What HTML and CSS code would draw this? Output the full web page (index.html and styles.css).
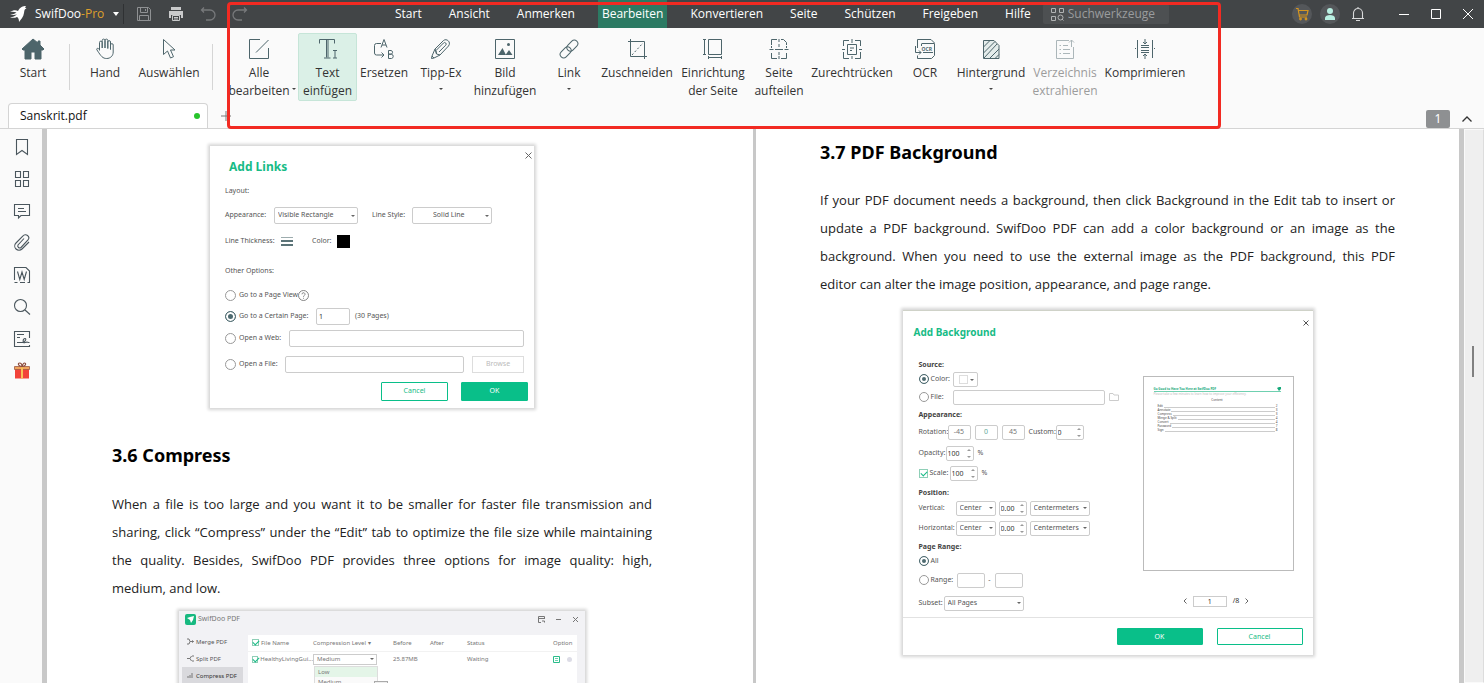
FILE: index.html
```html
<!DOCTYPE html>
<html lang="de">
<head>
<meta charset="utf-8">
<title>SwifDoo-Pro</title>
<link rel="stylesheet" href="styles.css">
</head>
<body>
<header class="titlebar">
  <div class="brand">
    <svg class="logo" width="18" height="18" viewBox="0 0 18 18"><path fill="#fff" d="M1 7C4 5 7 5 9 6C11 2 14 1 17 1L16 2.500L17.500 3.500C15.500 4 15.500 5 15 8C14.500 12 12 14 10 17C10 14.500 9.500 13 8 12C6 13 3.500 13 1 12.500C4 12 6 11 8 9.500C6 10 3 10 1 9.500C4 9.500 6 8.500 7.500 7.500C5.500 6.800 3 6.500 1 7Z"/></svg>
    <span>SwifDoo<span class="pro">-Pro</span></span>
    <svg width="8" height="6" viewBox="0 0 8 6"><path fill="#fff" d="M1 1h6L4 5z"/></svg>
  </div>
  <div class="quick">
    <button type="button" aria-label="Speichern"><svg width="16" height="16" viewBox="0 0 16 16" fill="none" stroke="#8f9193"><path d="M1.500 1.500h11l2 2v11h-13zM4.500 1.500v5h7v-5M3.500 14.500v-5h9v5M9.500 3v2"/></svg></button>
    <button type="button" aria-label="Drucken"><svg width="16" height="16" viewBox="0 0 16 16"><path fill="#c9cacb" d="M3 1h10v3H3zM1 5h14v7h-2V9H3v3H1z"/><path fill="none" stroke="#c9cacb" d="M4.500 9.500h7v5h-7zM6 11.500h4M6 13h4"/></svg></button>
    <button type="button" aria-label="Rückgängig"><svg width="16" height="16" viewBox="0 0 16 16" fill="none" stroke="#77797b" stroke-width="1.300"><path d="M4 1.500L1.500 4L4 6.500M1.500 4H10a4.700 4.700 0 0 1 0 10H6"/></svg></button>
    <button type="button" aria-label="Wiederholen"><svg width="16" height="16" viewBox="0 0 16 16" fill="none" stroke="#77797b" stroke-width="1.300"><path d="M12 1.500L14.500 4L12 6.500M14.500 4H6a4.700 4.700 0 0 0 0 10h4"/></svg></button>
  </div>
  <nav class="menu">
    <button type="button">Start</button><button type="button">Ansicht</button><button type="button">Anmerken</button><button type="button" class="active">Bearbeiten</button><button type="button">Konvertieren</button><button type="button">Seite</button><button type="button">Schützen</button><button type="button">Freigeben</button><button type="button">Hilfe</button>
  </nav>
  <label class="search">
    <svg width="13" height="13" viewBox="0 0 13 13" fill="none" stroke="#b0b2b3"><path d="M.500 .500h4v4h-4zM8.500 .500h4v4h-4zM.500 8.500h4v4h-4zM11 11l1.500 1.500"/><circle cx="9.500" cy="9.500" r="2.500"/></svg>
    <input type="text" placeholder="Suchwerkzeuge" aria-label="Suchwerkzeuge">
  </label>
  <div class="account">
    <button type="button" aria-label="Warenkorb"><svg width="20" height="20" viewBox="0 0 20 20" fill="none" stroke="#d6961f" stroke-width="1.200"><circle cx="10" cy="10" r="10" fill="#54575a" stroke="none"/><path d="M4 4.500h2l1.500 8.500H15M6.500 6.500H16L15 11H7.300"/><circle cx="8.500" cy="15" r=".8"/><circle cx="14" cy="15" r=".8"/></svg></button>
    <button type="button" aria-label="Konto"><svg width="20" height="20" viewBox="0 0 20 20"><circle cx="10" cy="10" r="10" fill="#54575a"/><g fill="#b9f0e2"><circle cx="10" cy="7" r="3"/><path d="M5 16v-2c0-4 10-4 10 0v2z"/></g></svg></button>
    <button type="button" aria-label="Mitteilungen"><svg width="14" height="16" viewBox="0 0 14 16" fill="none" stroke="#d8d9da" stroke-width="1.100"><path d="M1 12.500h12M2.500 12.500V7a4.500 4.500 0 0 1 9 0v5.500M7 2.500V1M5 14.500h4"/></svg></button>
  </div>
  <div class="window">
    <button type="button" aria-label="Minimieren"><svg width="12" height="12" viewBox="0 0 12 12" stroke="#fff"><path d="M1 6.500h10"/></svg></button>
    <button type="button" aria-label="Maximieren"><svg width="12" height="12" viewBox="0 0 12 12" fill="none" stroke="#fff"><path d="M1.500 1.500h9v9h-9z"/></svg></button>
    <button type="button" aria-label="Schließen"><svg width="12" height="12" viewBox="0 0 12 12" stroke="#fff"><path d="M1 1l10 10M11 1L1 11"/></svg></button>
  </div>
</header>

<div class="ribbon">
  <button type="button" class="tool"><svg viewBox="0 0 22 22"><path fill="#4d656b" d="M11 1L0 11l1 1h2v9h6v-7h4v7h6v-9h2l1-1-4-4V3h-2v2z"/></svg><span>Start</span></button>
  <i class="rule"></i>
  <button type="button" class="tool"><svg viewBox="0 0 22 22"><path d="M5.500 12.500V4.500a1.300 1.300 0 0 1 2.700 0V10V2.500a1.300 1.300 0 0 1 2.800 0V10V2.500a1.300 1.300 0 0 1 2.800 0V10.500V4a1.300 1.300 0 0 1 2.700 0v7.500V7a1.300 1.300 0 0 1 2.700 0v7c0 4-3 6.500-6.500 6.500c-4 0-5.500-2-9.700-8.500c-1-1.600.8-2.400 2.500-.500"/></svg><span>Hand</span></button>
  <button type="button" class="tool"><svg viewBox="0 0 22 22"><path d="M5.500 1.500v15l4-3.500l3 7l3-1.300l-3-6.700h4.500z"/></svg><span>Auswählen</span></button>
  <i class="rule"></i>
  <button type="button" class="tool"><svg viewBox="0 0 22 22"><path d="M12 1.500H1.500v19h19V10M8 14.500L20.500 2"/></svg><span>Alle<br>bearbeiten</span><i class="caret beside"></i></button>
  <button type="button" class="tool selected"><svg viewBox="0 0 22 22"><path d="M2.500 5.500V1.500h15v4M9.500 1.500v18M11 1.500v18M7 20h6.500M16 12.500h4M16 20h4M18 12.500V20"/></svg><span>Text<br>einfügen</span></button>
  <button type="button" class="tool"><svg viewBox="0 0 22 22"><path d="M8 9.500L11 1.500l3 8M9 7h4M8 5.500H3.500a2 2 0 0 0-2 2V15a2 2 0 0 0 2 2H11M8.500 14.500L11 17l-2.500 2.500M15.500 12.500v8h3a2.200 2.200 0 0 0 0-4.300h-3h2.600a1.900 1.900 0 0 0 0-3.700z"/></svg><span>Ersetzen</span></button>
  <button type="button" class="tool"><svg viewBox="0 0 22 22"><path d="M5 11L13.500 2.500c3-2.500 8 1.500 5 5.500L10 17l-3.500-1zM5 11L2 18l2 2l6-3M6.500 16L6 12.500L13.500 5a1.500 1.500 0 0 1 2.200 2.200L9 14M2 18l-.5 2.500L4 20"/></svg><span>Tipp-Ex</span><i class="caret"></i></button>
  <button type="button" class="tool"><svg viewBox="0 0 22 22"><path d="M1.500 1.500h19v19h-19z"/><path fill="#4d656b" stroke="none" d="M4 17l4.500-7l3.500 7zM11.500 17l3.500-5l3.500 5z"/><circle cx="14.500" cy="6.500" r="1.500" fill="#4d656b" stroke="none"/></svg><span>Bild<br>hinzufügen</span></button>
  <button type="button" class="tool"><svg viewBox="0 0 22 22"><g transform="rotate(-45 11 11)"><rect x="0" y="7.500" width="12.500" height="7" rx="3.500"/><rect x="9.500" y="7.500" width="12.500" height="7" rx="3.500"/></g></svg><span>Link</span><i class="caret"></i></button>
  <button type="button" class="tool"><svg viewBox="0 0 22 22"><path d="M2 3.500h16.500V21M4.500 1v17.500H21"/><path stroke-dasharray="2 2" d="M6 17L17 5"/></svg><span>Zuschneiden</span></button>
  <button type="button" class="tool"><svg viewBox="0 0 22 22"><path d="M6.500 1.500h13v15h-13zM2.500 1.500v15M1 1.500h3M1 16.500h3M6.500 19.500h13M6.500 18v3M19.500 18v3"/></svg><span>Einrichtung<br>der Seite</span></button>
  <button type="button" class="tool"><svg viewBox="0 0 22 22"><path d="M9 1.500H3.500V7M13 1.500h2.500l3 3V7M3.500 15v5.500H9M18.500 15v5.500H13M1.500 11.500h4M16.500 11.500h4M11 1v3M11 18v3M11 6v3M11 14v3M7 11.500h8M3.500 8v2M18.500 8v2"/></svg><span>Seite<br>aufteilen</span></button>
  <button type="button" class="tool"><svg viewBox="0 0 22 22"><path d="M8 2.500H2.500V8M14 2.500h5.500V8M2.500 14v6.500H8M14 20.500h5.500V14M11 1v4M11 18v3M1 11.500h3M18 11.500h3M6.500 6.500h9v10h-9zM9 10h4M9 12.500h2"/></svg><span>Zurechtrücken</span></button>
  <button type="button" class="tool"><svg viewBox="0 0 22 22"><path d="M3.500 10V1.500H17l3.500 3.500M8 5.500h12.500v10M3.500 17.500v3h14l3-3V15M1.500 8v6.500H7M5 12.500l2 2l-2 2M7.500 5.500V8M9 14.500h10"/><text x="7.500" y="12.500" font-size="5" font-weight="700" fill="#4d656b" stroke="none">OCR</text></svg><span>OCR</span></button>
  <button type="button" class="tool"><svg viewBox="0 0 22 22"><path fill="#e4eceb" d="M3.500 2.500H14l5 5v13H3.500z"/><path d="M3.500 9L10 2.500M3.500 15L15 3.500M4 20L17 6M9.500 20.500L19 11M15 20.500l4-4"/></svg><span>Hintergrund</span><i class="caret"></i></button>
  <button type="button" class="tool" disabled><svg viewBox="0 0 22 22"><path d="M15 2.500H2.500v18h17V9M17.500 9V2M15 4.500L17.500 2L20 4.500M9 7.500h5M9 11.500h7M9 15.500h7M5.500 7.500h1.500M5.500 11.500h1.500M5.500 15.500h1.500"/></svg><span>Verzeichnis<br>extrahieren</span></button>
  <button type="button" class="tool"><svg viewBox="0 0 22 22"><path d="M3.500 2v18M18.500 2v18M7 9.500h8M7 12.500h8M11 1v5M9 4l2 2l2-2M11 21v-5M9 18l2-2l2 2M1 10.500h1M20 10.500h1M7 7.500h8M7 14.500h8"/></svg><span>Komprimieren</span></button>
</div>

<div class="tabs">
  <div class="tab"><span>Sanskrit.pdf</span><i class="dot"></i></div>
  <button type="button" class="plus" aria-label="Neuer Tab"><svg width="12" height="12" viewBox="0 0 12 12" stroke="#777"><path d="M6 1v10M1 6h10"/></svg></button>
  <span class="count">1</span>
  <button type="button" class="fold" aria-label="Einklappen"><svg width="12" height="8" viewBox="0 0 12 8" fill="none" stroke="#333" stroke-width="1.300"><path d="M1.500 6.500L6 2l4.500 4.500"/></svg></button>
</div>

<main class="work">
  <aside class="rail">
    <button type="button" aria-label="Lesezeichen"><svg viewBox="0 0 18 18"><path d="M3.500 1.500h11v15L9 12.500l-5.500 4z"/></svg></button>
    <button type="button" aria-label="Miniaturen"><svg viewBox="0 0 18 18"><path d="M2.500 1.500h5v6h-5zM10.500 1.500h5v6h-5zM2.500 10.500h5v6h-5zM10.500 10.500h5v6h-5z"/></svg></button>
    <button type="button" aria-label="Kommentare"><svg viewBox="0 0 18 18"><path d="M1.500 2.500h15v11H8L5.500 16v-2.500h-4zM5 6.500h6M5 9.500h8"/></svg></button>
    <button type="button" aria-label="Anlagen"><svg viewBox="0 0 18 18"><path d="M16 8L9 15a4 4 0 0 1-6-6l7-7a3 3 0 0 1 5 4l-7 7.500a2 2 0 0 1-3-2.500L11 4.500"/></svg></button>
    <button type="button" aria-label="Word"><svg viewBox="0 0 18 18"><path d="M1.500 14V1.500H13L16.500 5v11.500h-2M4.500 16.500H1.500M7 16.500h5M4.500 5.500l2.300 8L9 6l2.200 7.500l2.300-8"/></svg></button>
    <button type="button" aria-label="Suchen"><svg viewBox="0 0 18 18"><circle cx="7.500" cy="7.500" r="6"/><path d="M12 12l5 4.500"/></svg></button>
    <button type="button" aria-label="Unterschrift"><svg viewBox="0 0 18 18"><path d="M16.500 8V1.500h-15v15h15V15M4 4.500h7M4 7.500h3M4 12.500h5c3 0 5-4 3-4s-3 5 0 4s2 0 4.500 0"/></svg></button>
    <button type="button" aria-label="Geschenk"><svg viewBox="0 0 18 18"><path fill="#f2433a" stroke="none" d="M2 7h14v9.500H2z"/><path fill="#f0a35c" stroke="#9d5a44" stroke-width=".8" d="M1.500 4.500h15v3h-15z"/><path fill="#f8c157" stroke="none" d="M8 5h2v11.500H8z"/><path stroke="#8c4a3c" d="M9 4.500C5 4.500 4.500 1 6.500 1S9 3 9 4.500S9.500 1 11.500 1S13 4.500 9 4.500"/></svg></button>
  </aside>

  <section class="page left" lang="en">
    <form class="dialog links">
      <button type="button" class="x" aria-label="Close"><svg width="7" height="7" viewBox="0 0 7 7" stroke="#666"><path d="M.500 .500l6 6M6.500 .500l-6 6"/></svg></button>
      <h3>Add Links</h3>
      <div class="row h26">Layout:</div>
      <div class="row h22"><label class="w48" for="appearance">Appearance:</label><span class="pick w84"><select id="appearance"><option>Visible Rectangle</option></select></span><label class="w38 push" for="linestyle">Line Style:</label><span class="pick w80 mid"><select id="linestyle"><option>Solid Line</option></select></span></div>
      <div class="row h30"><span class="w56">Line Thickness:</span><svg width="12" height="10" viewBox="0 0 12 10" stroke="#5b7478"><path d="M0 1.500h12" stroke-opacity=".6"/><path d="M0 5h12M0 9h12" stroke-width="2"/></svg><span class="push wide">Color:</span><i class="swatch"></i></div>
      <div class="row h30">Other Options:</div>
      <div class="row h18"><label><input type="radio" name="go">Go to a Page View</label><svg class="help" width="11" height="11" viewBox="0 0 11 11" fill="none" stroke="#777" stroke-width=".9"><circle cx="5.500" cy="5.500" r="5"/><path d="M4 4.300a1.500 1.500 0 1 1 2.300 1.200q-.8.500-.8 1.300M5.500 7.800v.9"/></svg></div>
      <div class="row h24"><label class="w90"><input type="radio" name="go" checked>Go to a Certain Page:</label><input class="w34" type="text" value="1" aria-label="Page"><span class="note">(30 Pages)</span></div>
      <div class="row h20"><label class="w62"><input type="radio" name="go">Open a Web:</label><input class="grow" type="text" aria-label="Web"></div>
      <div class="row h32"><label class="w58"><input type="radio" name="go">Open a File:</label><input class="grow" type="text" aria-label="File"><button type="button" class="browse" disabled>Browse</button></div>
      <div class="actions"><button type="button" class="ghost">Cancel</button><button type="button" class="solid">OK</button></div>
    </form>
    <h2>3.6 Compress</h2>
    <p><span>When a file is too large and you want it to be smaller for faster file transmission and</span><span>sharing, click “Compress” under the “Edit” tab to optimize the file size while maintaining</span><span>the quality. Besides, SwifDoo PDF provides three options for image quality: high,</span><span>medium, and low.</span></p>
    <div class="dialog compress">
      <div class="bar">
        <svg width="11" height="11" viewBox="0 0 11 11"><rect width="11" height="11" rx="2" fill="#17b980"/><path fill="#fff" d="M2 4l3-1l4-1l-1 4l-2 3l-1-3z"/></svg>
        <span class="name">SwifDoo PDF</span>
        <svg width="7" height="7" viewBox="0 0 7 7" fill="none" stroke="#777"><path d="M6.500 3V.500h-6v6H3M.500 2.500h6M4 5h2.500v1.500"/></svg>
        <svg width="7" height="7" viewBox="0 0 7 7" stroke="#777"><path d="M1 3.500h5"/></svg>
        <svg width="7" height="7" viewBox="0 0 7 7" stroke="#777"><path d="M1 1l5 5M6 1L1 6"/></svg>
      </div>
      <div class="inner">
        <div class="side">
          <button type="button"><svg viewBox="0 0 7 7"><path d="M0 1h2l1 2.500L2 6H0M3 3.500h3.500M5 2.500l1.500 1L5 4.500"/></svg>Merge PDF</button>
          <button type="button"><svg viewBox="0 0 7 7"><path d="M0 3.500h3M4.500 1L3 3.500L4.500 6M5 1h2M5 6h2"/></svg>Split PDF</button>
          <button type="button" class="on"><svg viewBox="0 0 7 7"><path d="M1 6V4M3 6V3M5 6V1"/></svg>Compress PDF</button>
        </div>
        <div class="panel">
          <table>
            <thead><tr><th class="c1"><label><input type="checkbox" checked>File Name</label></th><th class="c2">Compression Level ▾</th><th class="c3">Before</th><th class="c3">After</th><th>Status</th><th class="c5">Option</th></tr></thead>
            <tbody><tr><td><label><input type="checkbox" checked>HealthyLivingGui...</label></td><td><span class="pick w64"><select aria-label="Compression Level"><option>Medium</option></select></span></td><td>25.87MB</td><td></td><td>Waiting</td><td class="c5"><svg width="20" height="7" viewBox="0 0 20 7" fill="none"><path stroke="#2bbd8b" d="M.500 .500h6v6h-6z"/><path stroke="#2bbd8b" stroke-width=".7" d="M2 2.500h3M2 4.500h3"/><circle cx="16.500" cy="3.500" r="2.500" fill="#dcdce6"/></svg></td></tr></tbody>
          </table>
          <ul class="drop"><li class="hot">Low</li><li>Medium</li></ul>
          <i class="tip"></i>
        </div>
      </div>
    </div>
  </section>

  <section class="page right" lang="en">
    <h2>3.7 PDF Background</h2>
    <p><span>If your PDF document needs a background, then click Background in the Edit tab to insert or</span><span>update a PDF background. SwifDoo PDF can add a color background or an image as the</span><span>background. When you need to use the external image as the PDF background, this PDF</span><span>editor can alter the image position, appearance, and page range.</span></p>
    <form class="dialog back">
      <button type="button" class="x" aria-label="Close"><svg width="6" height="6" viewBox="0 0 6 6" stroke="#555"><path d="M.500 .500l5 5M5.500 .500l-5 5"/></svg></button>
      <h3>Add Background</h3>
      <div class="split">
        <div class="fields">
          <div class="row h16"><b>Source:</b></div>
          <div class="row h12"><label class="w34"><input type="radio" name="src" checked>Color:</label><button type="button" class="color" aria-label="Color"><i></i></button></div>
          <div class="row h24"><label class="w34"><input type="radio" name="src">File:</label><input class="w152" type="text" aria-label="File"><svg class="gap" width="10" height="8" viewBox="0 0 10 8" fill="none" stroke="#ccc"><path d="M.500 7.500v-7h3.500l1 1.500h4.500v5.500z"/></svg></div>
          <div class="row h12"><b>Appearance:</b></div>
          <div class="row h22"><span class="w29">Rotation:</span><button type="button" class="deg">-45</button><button type="button" class="deg teal">0</button><button type="button" class="deg">45</button><label class="w27" for="custom">Custom:</label><span class="spin"><input id="custom" type="number" value="0"></span></div>
          <div class="row h20"><label class="w27" for="opacity">Opacity:</label><span class="spin"><input id="opacity" type="number" value="100"></span><span class="gap">%</span></div>
          <div class="row h20"><label class="w31"><input type="checkbox" checked>Scale:</label><span class="spin"><input type="number" value="100" aria-label="Scale"></span><span class="gap">%</span></div>
          <div class="row h20"><b>Position:</b></div>
          <div class="row h10"><label class="w37" for="vert">Vertical:</label><span class="pick w40"><select id="vert"><option>Center</option></select></span><span class="spin inset"><input type="text" value="0.00" aria-label="Vertical offset"></span><span class="pick w60"><select aria-label="Vertical unit"><option>Centermeters</option></select></span></div>
          <div class="row h30"><label class="w37" for="horiz">Horizontal:</label><span class="pick w40"><select id="horiz"><option>Center</option></select></span><span class="spin inset"><input type="text" value="0.00" aria-label="Horizontal offset"></span><span class="pick w60"><select aria-label="Horizontal unit"><option>Centermeters</option></select></span></div>
          <div class="row h8"><b>Page Range:</b></div>
          <div class="row h20"><label><input type="radio" name="rng" checked>All</label></div>
          <div class="row h18"><label class="w38"><input type="radio" name="rng">Range:</label><input class="w28" type="text" aria-label="From"><span class="dash">-</span><input class="w28" type="text" aria-label="To"></div>
          <div class="row h28"><label class="w25" for="subset">Subset:</label><span class="pick w80"><select id="subset"><option>All Pages</option></select></span></div>
        </div>
        <div class="preview">
          <div class="sheet">
            <div class="head"><span>Go Good to Have You Here at SwifDoo PDF</span><svg width="4" height="4" viewBox="0 0 4 4"><path fill="#17a97a" d="M0 1l2-1h2v2L2 4z"/></svg></div>
            <div class="sub">Please take a few minutes to learn how to improve your efficiency.</div>
            <div class="toc">Content</div>
            <ol><li>Edit<i></i>2</li><li>Annotate<i></i>3</li><li>Compress<i></i>3</li><li>Merge &amp; Split<i></i>4</li><li>Convert<i></i>4</li><li>Password<i></i>7</li><li>Sign<i></i>8</li></ol>
          </div>
          <div class="pager"><button type="button" aria-label="Previous"><svg width="4" height="6" viewBox="0 0 4 6" fill="none" stroke="#666"><path d="M3.500 .500L1 3l2.500 2.500"/></svg></button><input type="text" value="1" aria-label="Preview page"><span>/8</span><button type="button" aria-label="Next"><svg width="4" height="6" viewBox="0 0 4 6" fill="none" stroke="#666"><path d="M.500 .500L3 3L.500 5.500"/></svg></button></div>
        </div>
      </div>
      <div class="foot"><button type="button" class="solid">OK</button><button type="button" class="ghost">Cancel</button></div>
    </form>
  </section>
  <div class="scroll"><i></i></div>
</main>
<div class="marker"></div>
</body>
</html>
```

FILE: styles.css
```css
* { box-sizing: border-box; }
body { margin: 0; height: 100vh; display: flex; flex-direction: column; overflow: hidden; position: relative; background: #fafafa; color: #333; font: 12px/18px "Noto Sans", "Open Sans", sans-serif; }
button, input, select { font: inherit; color: inherit; margin: 0; padding: 0; border: 0; background: none; }
button { display: flex; align-items: center; justify-content: center; }
svg { flex: none; display: block; }

/* title bar */
.titlebar { height: 28px; flex: none; display: flex; align-items: center; background: #424547; color: #fff; font-family: "Open Sans", sans-serif; }
.brand { width: 124px; height: 20px; padding-left: 9px; display: flex; align-items: center; gap: 8px; border-right: 1px solid #2f3133; }
.pro { color: #dfa02c; }
.quick { display: flex; margin-left: 4px; }
.quick button { width: 32px; height: 28px; }
.menu { height: 28px; display: flex; margin-left: 135px; gap: 19px; }
.menu button { padding: 0 4px; }
.menu .active { background: #2c7a63; }
.search { width: 126px; height: 20px; margin-left: 8px; padding-left: 8px; display: flex; align-items: center; gap: 4px; background: #4d5052; border-radius: 2px; }
.search input { width: 100px; outline: 0; }
.search input::placeholder { color: #9a9c9e; opacity: 1; }
.account { display: flex; margin-left: auto; margin-right: 16px; }
.account button { width: 28px; height: 28px; }
.window { display: flex; }
.window button { width: 32px; height: 28px; }

/* ribbon */
.ribbon { flex: none; display: grid; grid-template-columns: 66px 12px 54px 74px 16px 74px 61px 54px 60px 68px 60px 76px 76px 56px 90px 56px 76px 72px 88px; padding: 5px 0 2px; font-family: "Open Sans", sans-serif; }
.rule { width: 1px; height: 46px; margin: 11px 0 0 3px; background: #d5d5d5; }
.ribbon .rule:nth-of-type(2) { margin-left: 6px; }
.tool { position: relative; height: 68px; padding-top: 5px; flex-direction: column; justify-content: flex-start; gap: 4px; white-space: nowrap; }
.tool svg { width: 22px; height: 22px; fill: none; stroke: #4d656b; }
.tool.selected { width: 59px; margin-left: 2px; background: #dbf0e7; border: 1px solid #c6e5d8; padding-top: 4px; border-radius: 2px; }
.tool:disabled { color: #9c9c9c; }
.tool:disabled svg { opacity: .45; }
.caret { border: 2px solid transparent; border-top-color: #444; border-bottom: 0; margin-top: 2px; }
.caret.beside { position: absolute; right: 0; bottom: 11px; }

/* document tabs */
.tabs { flex: none; height: 26px; padding-left: 8px; display: flex; align-items: flex-end; border-bottom: 1px solid #d4d4d4; }
.tab { width: 200px; height: 25px; padding: 0 7px 0 11px; display: flex; align-items: center; justify-content: space-between; background: #fff; border: 1px solid #d4d4d4; border-bottom: 0; border-radius: 4px 4px 0 0; color: #111; font-family: "Open Sans", sans-serif; }
.dot { width: 6px; height: 6px; border-radius: 50%; background: #27c42b; }
.plus { width: 24px; height: 24px; margin-left: 6px; }
.count { width: 24px; height: 18px; margin-left: auto; border-radius: 2px; background: #8e9092; color: #fff; text-align: center; }
.fold { width: 34px; height: 18px; }

/* work area */
.work { flex: 1; min-height: 0; display: grid; grid-template-columns: 42px minmax(0, 1fr) minmax(0, 1fr) 20px; grid-template-rows: minmax(0, 1fr); }
.rail { padding-top: 2px; }
.rail button { width: 44px; height: 32px; }
.rail svg { width: 18px; height: 18px; fill: none; stroke: #4a565d; stroke-width: 1.1; }
.page { overflow: hidden; background: #fff; }
.left { border-left: 5px solid #c8c8c8; padding: 17px 101px 0 65px; }
.right { border-left: 3px solid #c8c8c8; border-right: 5px solid #c8c8c8; padding: 9px 64px 0 64px; }
.scroll { background: #efefef; border: 1px solid #fafafa; border-right-color: #ddd; padding: 216px 0 0 7px; }
.scroll i { display: block; width: 2px; height: 31px; background: #808080; }
.page h2 { margin: 0; font: 700 18px/28px "Noto Sans", "Open Sans", sans-serif; color: #000; }
.page p { margin: 20px 0 0; font: 13px/28px "Open Sans", sans-serif; color: #222; }
.page p span { display: block; white-space: nowrap; text-align-last: justify; }
.page p span:last-child { text-align-last: left; }

/* dialogs drawn inside the document */
.dialog { position: relative; background: #fff; box-shadow: 0 0 3px 2px #d6d6d6; font: 7px/10px "Noto Sans", sans-serif; color: #555; }
.dialog h3 { margin: 0; color: #17bb86; font-weight: 700; }
.x { position: absolute; top: 6px; right: 2px; }
.row { display: flex; align-items: center; white-space: nowrap; }
.row > * { flex: none; }
.row label, .compress label { display: flex; align-items: center; gap: 2px; }
.row b { color: #444; }
.row input[type=text], .row input[type=number], .pick select, .deg, .color, .pager input { border: 1px solid #ccc; border-radius: 2px; background: #fff; }
.row input[type=text] { height: 15px; padding-left: 2px; color: #333; }
.row .grow { flex: 1; min-width: 0; }
input[type=radio] { appearance: none; width: 10px; height: 10px; border: 1px solid #999; border-radius: 50%; }
input[type=radio]:checked { border-color: #4d6a70; background: #4d6a70; box-shadow: inset 0 0 0 2px #fff; }
input[type=checkbox] { appearance: none; position: relative; width: 9px; height: 9px; border: 1px solid #8fcfb7; background: #fff; }
input[type=checkbox]::after { content: ""; position: absolute; left: 1px; top: 1px; width: 5px; height: 3px; border: solid #17bb86; border-width: 0 0 1px 1px; transform: rotate(-45deg); }
input[type=number] { appearance: textfield; -moz-appearance: textfield; }
input[type=number]::-webkit-inner-spin-button { appearance: none; margin: 0; }
.pick { position: relative; display: block; }
.pick select { appearance: none; display: block; width: 100%; height: 15px; padding-left: 3px; outline: 0; }
.pick::after, .color::after { content: ""; position: absolute; right: 3px; top: 6px; border: 2px solid transparent; border-top-color: #666; border-bottom: 0; }
.spin { position: relative; }
.spin input { width: 28px; height: 15px; padding-left: 1px; display: block; color: #333; }
.row .spin input { padding-left: 1px; }
.spin::before, .spin::after { content: ""; position: absolute; z-index: 1; right: 3px; top: 3px; border: 2px solid transparent; border-bottom-color: #999; border-top: 0; }
.spin::after { top: 10px; border-bottom: 0; border-top: 2px solid #999; }
.inset { margin: 0 3px; }
.gap { margin-left: 4px; }
.solid, .ghost { border: 1px solid #09bf89; border-radius: 1px; }
.solid { background: #09bf89; color: #fff; }
.ghost { background: #fff; color: #17bb86; }
.h8 { height: 8px; } .h10 { height: 10px; } .h12 { height: 12px; } .h16 { height: 16px; } .h18 { height: 18px; } .h20 { height: 20px; }
.h22 { height: 22px; } .h24 { height: 24px; } .h26 { height: 26px; } .h28 { height: 28px; } .h30 { height: 30px; } .h32 { height: 32px; }
.w25 { width: 25px; } .w27 { width: 27px; } .w28 { width: 28px; } .w29 { width: 29px; } .w31 { width: 31px; } .w34 { width: 34px; } .w37 { width: 37px; } .w38 { width: 38px; }
.w40 { width: 40px; } .w48 { width: 49px; } .w56 { width: 56px; } .w58 { width: 60px; } .w60 { width: 60px; } .w62 { width: 64px; } .w64 { width: 64px; }
.w80 { width: 80px; } .w84 { width: 84px; } .w90 { width: 91px; } .w152 { width: 152px; }

.links { width: 324px; margin-left: 98px; padding: 10px 10px 6px 15px; }
.links h3 { padding-left: 4px; font-size: 12px; line-height: 22px; }
.links .pick select { height: 17px; }
.links .pick::after { top: 8px; }
.links .mid select { padding-left: 20px; }
.links .row input[type=text] { height: 17px; }
.push { margin-left: 14px; }
.push.wide { margin: 0 6px 0 19px; }
.swatch { width: 13px; height: 13px; background: #000; }
.links .note { margin-left: 5px; }
.links label + .w80 { margin-left: 2px; }
.browse { width: 52px; height: 17px; margin-left: 8px; border: 1px solid #ddd; color: #bbb; }
.links input[type=radio] { width: 11px; height: 11px; }
.links label { gap: 3px; }
.actions { height: 22px; margin-right: -4px; display: flex; align-items: center; justify-content: flex-end; gap: 13px; }
.actions button { width: 67px; height: 19px; }

.left h2 { margin-top: 33px; }
.left p { margin-top: 21px; }

.compress { width: 406px; margin: 9px auto 0; background: #f2f2f5; font-size: 6px; line-height: 8px; color: #777; }
.bar { height: 24px; padding: 0 6px 8px; display: flex; align-items: center; gap: 10px; font-size: 7px; }
.bar .name { margin-right: auto; margin-left: -8px; }
.inner { display: flex; height: 90px; }
.side { width: 69px; }
.side button { width: 61px; height: 17px; margin-left: 3px; padding-left: 5px; justify-content: flex-start; gap: 2px; color: #555; }
.side button:first-child { margin-top: -2px; }
.side svg { width: 7px; height: 7px; fill: none; stroke: #777; }
.side .on { background: #d9d9dd; color: #333; }
.panel { position: relative; flex: 1; margin-right: 8px; background: #fff; }
.panel table { width: 100%; border-collapse: collapse; table-layout: fixed; }
.panel th { height: 16px; padding: 0; font-weight: 400; text-align: left; border-bottom: 1px solid #f2f2f2; white-space: nowrap; }
.panel td { height: 16px; padding: 0; white-space: nowrap; }
.panel label { padding-left: 4px; }
.compress input[type=checkbox] { width: 7px; height: 7px; }
.compress input[type=checkbox]::after { left: 0; top: 0; }
.c1 { width: 65px; } .c2 { width: 80px; } .c3 { width: 37px; }
.panel .c5 { width: 30px; padding-left: 6px; }
.compress .pick select { height: 11px; border-radius: 0; }
.compress .pick::after { top: 4px; }
.drop { position: absolute; left: 66px; top: 31px; width: 64px; height: 40px; margin: 0; padding: 0; list-style: none; background: #fafafa; border: 1px solid #ddd; }
.drop li { height: 10px; padding: 1px 3px; }
.drop .hot { background: #e4f5e8; }
.tip { position: absolute; left: 126px; top: 46px; width: 14px; height: 10px; border: 1px solid #aaa; background: #eee; }

.back { width: 410px; margin: 12px auto 0; padding-top: 12px; border-top: 1px solid #cfd2c8; }
.back .x { top: 9px; right: 4px; }
.back h3 { padding-left: 11px; font-size: 10px; line-height: 19px; }
.split { display: flex; justify-content: space-between; padding: 15px 19px 0 16px; }
.row .color { position: relative; width: 25px; height: 15px; justify-content: flex-start; padding-left: 5px; }
.color i { width: 9px; height: 9px; border: 1px solid #ddd; }
.deg { width: 23px; height: 15px; margin-right: 4px; color: #777; }
.teal { color: #5fa99a; }
.dash { width: 10px; text-align: center; }
.preview { width: 151px; padding-top: 19px; }
.sheet { height: 195px; padding: 10px 12px 0 10px; border: 1px solid #bbb; font: 3px/4px "Noto Sans", sans-serif; color: #444; }
.head { display: flex; justify-content: space-between; border-bottom: 1px solid #6fd0b0; color: #17a97a; font-weight: 700; }
.sub { color: #bbb; }
.toc { text-align: center; line-height: 8px; }
.sheet ol { margin: 0; padding: 0 3px 0 4px; list-style: none; }
.sheet li { display: flex; align-items: flex-end; gap: 1px; }
.sheet li i { flex: 1; border-bottom: 1px solid #ccc; }
.pager { height: 46px; display: flex; align-items: center; justify-content: center; gap: 6px; padding: 14px 4px 0 0; color: #333; }
.pager input { width: 34px; height: 11px; text-align: center; border-radius: 0; }
.foot { height: 38px; padding-right: 10px; display: flex; align-items: center; justify-content: flex-end; gap: 14px; border-top: 1px solid #e2e2e2; }
.foot button { width: 86px; height: 17px; }

/* highlight frame over the edit ribbon */
.marker { position: absolute; left: 227px; top: 2px; width: 994px; height: 127px; border: 3px solid #f22a22; border-radius: 4px; pointer-events: none; }
```
